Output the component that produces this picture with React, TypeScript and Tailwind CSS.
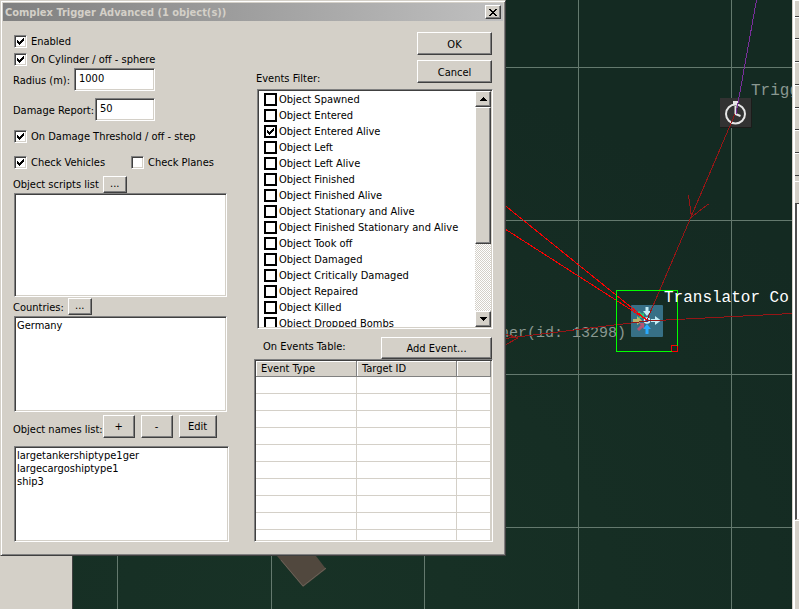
import { useId, useState } from "react";
import type { ReactNode } from "react";

interface CheckboxProps {
  label: string;
  defaultChecked?: boolean;
  flat?: boolean;
}

interface PushButtonProps {
  children: ReactNode;
  className?: string;
  label?: string;
}

interface ListBoxProps {
  label: string;
  items: string[];
  className?: string;
}

const sunken =
  "bg-white border border-t-[#808080] border-l-[#808080] border-r-white border-b-white shadow-[inset_1px_1px_0_#404040,inset_-1px_-1px_0_#d4d0c8]";
const raised =
  "bg-[#d4d0c8] border border-t-white border-l-white border-r-[#404040] border-b-[#404040] shadow-[inset_-1px_-1px_0_#808080]";

const events = [
  "Object Spawned",
  "Object Entered",
  "Object Entered Alive",
  "Object Left",
  "Object Left Alive",
  "Object Finished",
  "Object Finished Alive",
  "Object Stationary and Alive",
  "Object Finished Stationary and Alive",
  "Object Took off",
  "Object Damaged",
  "Object Critically Damaged",
  "Object Repaired",
  "Object Killed",
  "Object Dropped Bombs",
];

const toolHeights = ["h-[17px]", "h-[22px]", "h-[23px]", "h-[23px]", "h-[23px]", "h-[22px]", "h-[23px]", "h-[23px]"];

function Checkbox({ label, defaultChecked = false, flat = false }: CheckboxProps) {
  const [checked, setChecked] = useState(defaultChecked);

  return (
    <label className={`flex items-center whitespace-nowrap ${flat ? "h-4 gap-[2px]" : "h-[18px] gap-1"}`}>
      <span className="grid shrink-0">
        <input
          type="checkbox"
          checked={checked}
          onChange={(e) => setChecked(e.target.checked)}
          className={`[grid-area:1/1] size-[13px] appearance-none ${flat ? "border-2 border-black bg-white" : sunken}`}
        />
        {checked && (
          <svg
            className="[grid-area:1/1] size-[13px] pointer-events-none"
            viewBox="0 0 13 13"
            shapeRendering="crispEdges"
            aria-hidden="true"
          >
            <path d="M3 5h1v1h1v1h1v-1h1v-1h1v-1h1v-1h1v3h-1v1h-1v1h-1v1h-1v1h-1v-1h-1v-1h-1z" />
          </svg>
        )}
      </span>
      <span className="pt-[2px]">{label}</span>
    </label>
  );
}

function PushButton({ children, className = "", label }: PushButtonProps) {
  return (
    <button type="button" aria-label={label} className={`flex items-center justify-center ${raised} ${className}`}>
      {children}
    </button>
  );
}

function TextField({ label, value, width }: { label: string; value: string; width: string }) {
  const id = useId();

  return (
    <div className="flex items-end gap-px">
      <label htmlFor={id} className="pb-[3px] whitespace-nowrap">
        {label}
      </label>
      <input id={id} defaultValue={value} className={`h-[23px] px-1 pb-[2px] outline-none ${width} ${sunken}`} />
    </div>
  );
}

function ListBox({ label, items, className = "" }: ListBoxProps) {
  return (
    <ul aria-label={label} className={`p-[2px] leading-[13px] overflow-hidden ${sunken} ${className}`}>
      {items.map((item) => (
        <li key={item}>{item}</li>
      ))}
    </ul>
  );
}

function Arrow({ down = false }: { down?: boolean }) {
  return (
    <svg width="7" height="4" viewBox="0 0 7 4" shapeRendering="crispEdges" aria-hidden="true">
      <path d={down ? "M0 0h7v1h-1v1h-1v1h-1v1h-1v-1h-1v-1h-1v-1h-1z" : "M3 0h1v1h1v1h1v1h1v1h-7v-1h1v-1h1v-1h1z"} />
    </svg>
  );
}

function EventsFilter() {
  return (
    <div className={`flex h-[240px] p-px ${sunken}`}>
      <div className="flex-1 overflow-hidden pl-[5px]">
        {events.map((name) => (
          <Checkbox key={name} flat label={name} defaultChecked={name === "Object Entered Alive"} />
        ))}
      </div>
      <div className="flex w-4 flex-col bg-[repeating-conic-gradient(#fff_0_25%,#d4d0c8_0_50%)] bg-[length:2px_2px]">
        <PushButton label="Scroll up" className="h-4">
          <Arrow />
        </PushButton>
        <div className={`h-[137px] ${raised}`} />
        <PushButton label="Scroll down" className="mt-auto h-4">
          <Arrow down />
        </PushButton>
      </div>
    </div>
  );
}

function EventsTable() {
  const head =
    "h-4 border-r border-b border-[#808080] bg-[#d4d0c8] px-[5px] text-left font-normal leading-[15px] shadow-[inset_1px_1px_0_#fff]";
  const cell = "h-[17px] border-r border-b border-[#d4d0c8] p-0";

  return (
    <div className={`h-[183px] overflow-hidden p-px ${sunken}`}>
      <table className="w-full table-fixed border-separate border-spacing-0">
        <thead>
          <tr>
            <th className={`w-[101px] ${head}`}>Event Type</th>
            <th className={`w-[100px] ${head}`}>Target ID</th>
            <th className={head} aria-label="Details" />
          </tr>
        </thead>
        <tbody>
          {Array.from({ length: 10 }, (_, row) => (
            <tr key={row}>
              <td className={cell} />
              <td className={cell} />
              <td className={cell} />
            </tr>
          ))}
        </tbody>
      </table>
    </div>
  );
}

function MissionMap() {
  return (
    <svg
      className="absolute inset-0 size-full"
      viewBox="73 0 719 609"
      preserveAspectRatio="xMinYMin slice"
      role="img"
      aria-label="Mission map"
    >
      <defs>
        <radialGradient id="terrain" cx="0.3" cy="1" r="0.9">
          <stop offset="0" stopColor="#183226" />
          <stop offset="1" stopColor="#142a22" />
        </radialGradient>
      </defs>
      <rect x="72" width="720" height="609" fill="url(#terrain)" />
      <path d="M277 556h39l10 13-23 18z" fill="#51483e" />
      <path d="M281 560l22 26 23-18" fill="none" stroke="#6a6258" />
      <path
        d="M117.500 0v609M271.500 0v609M424.500 0v609M578.500 0v609M731.500 0v609M72 67.500h720M72 220.500h720M72 374.500h720M72 527.500h720"
        stroke="#64796e"
        shapeRendering="crispEdges"
      />
      <rect x="720" y="98" width="31" height="30" fill="#323232" />
      <path d="M720 127.500h31.500V98" fill="none" stroke="#1c1c1a" />
      <g fill="none" stroke="#e6e6e6" strokeWidth="2">
        <circle cx="735.500" cy="114" r="9.500" />
        <path d="M735.500 106v8l5 2" />
        <path d="M733 103h5" strokeWidth="4" />
      </g>
      <g fontFamily='"Liberation Mono", monospace' fill="#8a9891">
        <text x="751" y="95" fontSize="16">
          Trigg
        </text>
        <text x="626" y="337" fontSize="15" textAnchor="end">
          ner(id: 13298)
        </text>
      </g>
      <rect x="631" y="305" width="32" height="32" rx="1" fill="#377086" />
      <g strokeWidth="3" fill="none">
        <path d="M647 307v5" stroke="#c4edf5" />
        <path d="M651 320.500h5" stroke="#c4edf5" />
        <path d="M647 334v-6" stroke="#29aaff" />
        <path d="M633 320.500h5" stroke="#b9b66c" />
        <path d="M638 312l4 4" stroke="#2fc276" />
        <path d="M638 330l4-4" stroke="#b65472" />
      </g>
      <path d="M643 311h8l-4 5z" fill="#c4edf5" />
      <path d="M655 316v9l6-4.500z" fill="#c4edf5" />
      <path d="M643 329h8l-4-5z" fill="#29aaff" />
      <path d="M637 316v9l5-4.500z" fill="#b9b66c" />
      <path d="M644 312v6h-6z" fill="#2fc276" />
      <path d="M639 323h5v6z" fill="#b65472" />
      <circle cx="647" cy="320.500" r="2.500" fill="#223a9a" stroke="#d8f2f8" strokeWidth="1.500" />
      <g fill="none" shapeRendering="crispEdges">
        <path d="M756.500 0L736 114" stroke="#7a2e9c" />
        <path d="M735 114L647 320M688.500 195l3 22 17-13M505 338.500L647 321 792 313.500M505 345l13-7-13-4" stroke="#961616" />
        <path d="M505 205.500L647 320M505 229L647 320" stroke="#ff0000" />
        <rect x="671.500" y="345.500" width="6" height="6" stroke="#ff0000" />
        <path d="M671.500 351.500h-55v-61h61v55" stroke="#00ff00" />
      </g>
      <text x="664" y="302" fontSize="16" fontFamily='"Liberation Mono", monospace' fill="#ffffff">
        Translator Co
      </text>
    </svg>
  );
}

function ToolRail() {
  return (
    <aside className="flex w-[7px] shrink-0 flex-col border-l border-[#d4d0c8] bg-[#d4d0c8] shadow-[inset_2px_0_0_#fff]">
      {toolHeights.map((height, i) => (
        <div key={i} className={`ml-[2px] border-b border-[#404040] shadow-[inset_0_1px_0_#fff] ${height}`} />
      ))}
      <div className="mt-[5px] ml-[2px] h-[22px] border-t border-white" />
      <div className="ml-[2px] h-[317px] border-l-2 border-y border-t-[#404040] border-b-[#d4d0c8] border-l-[#505050] bg-white" />
      <div className="ml-[2px] border-t border-white" />
    </aside>
  );
}

function TriggerDialog() {
  return (
    <section
      role="dialog"
      aria-labelledby="dialog-title"
      className="absolute top-0 left-0 w-[506px] border border-t-[#d4d0c8] border-l-[#d4d0c8] border-r-[#404040] border-b-[#404040] bg-[#d4d0c8] p-[2px] shadow-[inset_1px_1px_0_#fff,inset_-1px_-1px_0_#808080]"
    >
      <header className="flex h-[18px] items-center justify-between bg-linear-to-r from-[#808080] to-[#c0c0c0] pr-[2px] pl-[2px]">
        <h1 id="dialog-title" className="pt-px font-bold text-[#d4d0c8]">
          Complex Trigger Advanced (1 object(s))
        </h1>
        <PushButton label="Close" className="h-[14px] w-4">
          <svg width="8" height="7" viewBox="0 0 8 7" shapeRendering="crispEdges" aria-hidden="true">
            <path d="M0 0h2v1h1v1h2v-1h1v-1h2v1h-1v1h-1v1h-1v1h1v1h1v1h1v1h-2v-1h-1v-1h-2v1h-1v1h-2v-1h1v-1h1v-1h1v-1h-1v-1h-1v-1h-1z" />
          </svg>
        </PushButton>
      </header>

      <div className="flex justify-between pt-[11px] pr-[10px] pb-[11px] pl-[11px]">
        <div className="flex w-[215px] flex-col">
          <Checkbox label="Enabled" defaultChecked />
          <Checkbox label="On Cylinder / off - sphere" defaultChecked />
          <div className="-ml-px flex w-[142px] flex-col gap-[7px]">
            <TextField label="Radius (m):" value="1000" width="ml-auto w-[81px]" />
            <TextField label="Damage Report:" value="50" width="ml-auto w-[60px]" />
          </div>
          <div className="mt-[6px]">
            <Checkbox label="On Damage Threshold / off - step" defaultChecked />
          </div>
          <div className="mt-2 grid grid-cols-[117px_1fr]">
            <Checkbox label="Check Vehicles" defaultChecked />
            <Checkbox label="Check Planes" />
          </div>

          <div className="mt-[5px] -ml-px flex items-center gap-1">
            <span className="pt-px">Object scripts list</span>
            <PushButton className="h-[17px] w-6 pb-px">...</PushButton>
          </div>
          <ListBox label="Object scripts list" items={[]} className="mr-[2px] h-[104px]" />

          <div className="mt-px -ml-px flex items-end gap-1">
            <span>Countries:</span>
            <PushButton className="h-[17px] w-6 pb-px">...</PushButton>
          </div>
          <ListBox label="Countries" items={["Germany"]} className="mt-px mr-[2px] h-24" />

          <div className="mt-[3px] -ml-px flex items-center">
            <span className="pt-[6px]">Object names list:</span>
            <div className="flex gap-[6px]">
              <PushButton className="h-[23px] w-8">+</PushButton>
              <PushButton className="h-[23px] w-8">-</PushButton>
              <PushButton className="h-[23px] w-[38px]">Edit</PushButton>
            </div>
          </div>
          <ListBox
            label="Object names list"
            items={["largetankershiptype1ger", "largecargoshiptype1", "ship3"]}
            className="mt-2 h-24"
          />
        </div>

        <div className="flex w-[239px] flex-col">
          <div className="ml-[2px] flex items-end justify-between">
            <span className="pb-[3px]">Events Filter:</span>
            <div className="mr-px flex w-[75px] flex-col gap-[5px] pb-[6px]">
              <PushButton className="h-[23px] pt-[2px]">OK</PushButton>
              <PushButton className="h-[23px] pt-[2px]">Cancel</PushButton>
            </div>
          </div>
          <div className="ml-[3px]">
            <EventsFilter />
          </div>
          <div className="mt-2 mr-px ml-[9px] flex items-center justify-between">
            <span className="pb-[2px]">On Events Table:</span>
            <PushButton className="h-[22px] w-[111px] pt-[2px]">Add Event...</PushButton>
          </div>
          <EventsTable />
        </div>
      </div>
    </section>
  );
}

export default function App() {
  return (
    <main className="relative flex min-h-screen overflow-hidden bg-[#d4d0c8] font-['DejaVu_Sans_Condensed','DejaVu_Sans',sans-serif] text-[11px] leading-[14px] text-black">
      <div className="w-[73px] shrink-0 border-r border-[#404040]" />
      <div className="relative flex-1 overflow-hidden">
        <MissionMap />
      </div>
      <ToolRail />
      <TriggerDialog />
    </main>
  );
}
